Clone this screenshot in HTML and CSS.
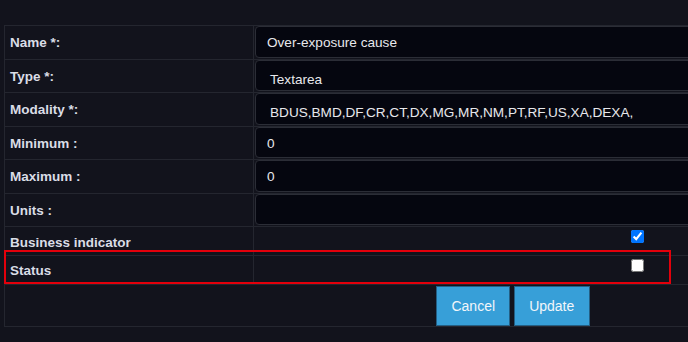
FILE: index.html
```html
<!DOCTYPE html>
<html lang="en">
<head>
    <meta charset="UTF-8">
    <title>Edit field</title>
    <link rel="stylesheet" href="styles.css">
</head>
<body>
<div class="page">
    <table class="form">
        <tr class="r34">
            <td class="lbl">Name *:</td>
            <td class="val"><div class="field">Over-exposure cause</div></td>
        </tr>
        <tr class="r33">
            <td class="lbl">Type *:</td>
            <td class="val"><div class="field sel">Textarea</div></td>
        </tr>
        <tr class="r34">
            <td class="lbl">Modality *:</td>
            <td class="val"><div class="field sel">BDUS,BMD,DF,CR,CT,DX,MG,MR,NM,PT,RF,US,XA,DEXA,</div></td>
        </tr>
        <tr class="r33">
            <td class="lbl">Minimum :</td>
            <td class="val"><div class="field">0</div></td>
        </tr>
        <tr class="r34">
            <td class="lbl">Maximum :</td>
            <td class="val"><div class="field">0</div></td>
        </tr>
        <tr class="r33">
            <td class="lbl">Units :</td>
            <td class="val"><div class="field"></div></td>
        </tr>
        <tr class="r29">
            <td class="lbl low">Business indicator</td>
            <td class="chk"><input type="checkbox" checked></td>
        </tr>
        <tr class="r29">
            <td class="lbl">Status</td>
            <td class="chk"><input type="checkbox"></td>
        </tr>
        <tr class="btns">
            <td colspan="2">
                <button class="btn">Cancel</button>
                <button class="btn">Update</button>
            </td>
        </tr>
    </table>
    <div class="mark"></div>
</div>
</body>
</html>
```

FILE: styles.css
```css
* {
    margin: 0;
    padding: 0;
    box-sizing: border-box;
}

body {
    background-color: #12131c;
    font-family: "Liberation Sans", Arial, sans-serif;
    overflow: hidden;
}

.page {
    position: relative;
    width: 688px;
    height: 342px;
    padding: 25px 0 0 4px;
}

.form {
    width: 1018px;
    border-collapse: collapse;
    table-layout: fixed;
}

.form td {
    border: 1px solid #24262f;
}

.r34 {
    height: 34px;
}

.r33 {
    height: 33px;
}

.r29 {
    height: 29px;
}

.lbl {
    width: 249px;
    padding: 0 5px;
    color: #dadde6;
    font-size: 13.5px;
    font-weight: bold;
    vertical-align: middle;
}

.lbl.low {
    padding-top: 3px;
}

.val {
    padding: 0 0 0 1px;
    vertical-align: top;
}

.field {
    background-color: #05060f;
    border: 1px solid #2b2d36;
    border-radius: 4px 0 0 4px;
    color: #e8e8ec;
    font-size: 13.6px;
    padding: 1px 0 0 11px;
    white-space: nowrap;
}

.r34 .field {
    height: 32px;
    line-height: 30px;
}

.r33 .field {
    height: 31px;
    line-height: 30px;
}

.field.sel {
    padding: 4px 0 0 14px;
}

.chk {
    text-align: center;
    vertical-align: middle;
    padding-bottom: 10px;
}

.chk input {
    width: 13px;
    height: 13px;
    vertical-align: middle;
}

.btns {
    height: 42px;
}

.btns td {
    text-align: center;
    padding-top: 1px;
    vertical-align: top;
}

.btn {
    width: 74px;
    height: 40px;
    background-color: #379fd8;
    border: 1px solid #245f84;
    color: #f2f6fa;
    font-family: "Liberation Sans", Arial, sans-serif;
    font-size: 14px;
}

.btn + .btn {
    margin-left: -1px;
    width: 76px;
}

.mark {
    position: absolute;
    left: 4px;
    top: 250px;
    width: 667px;
    height: 34px;
    border: 2px solid #e3000b;
}
```
